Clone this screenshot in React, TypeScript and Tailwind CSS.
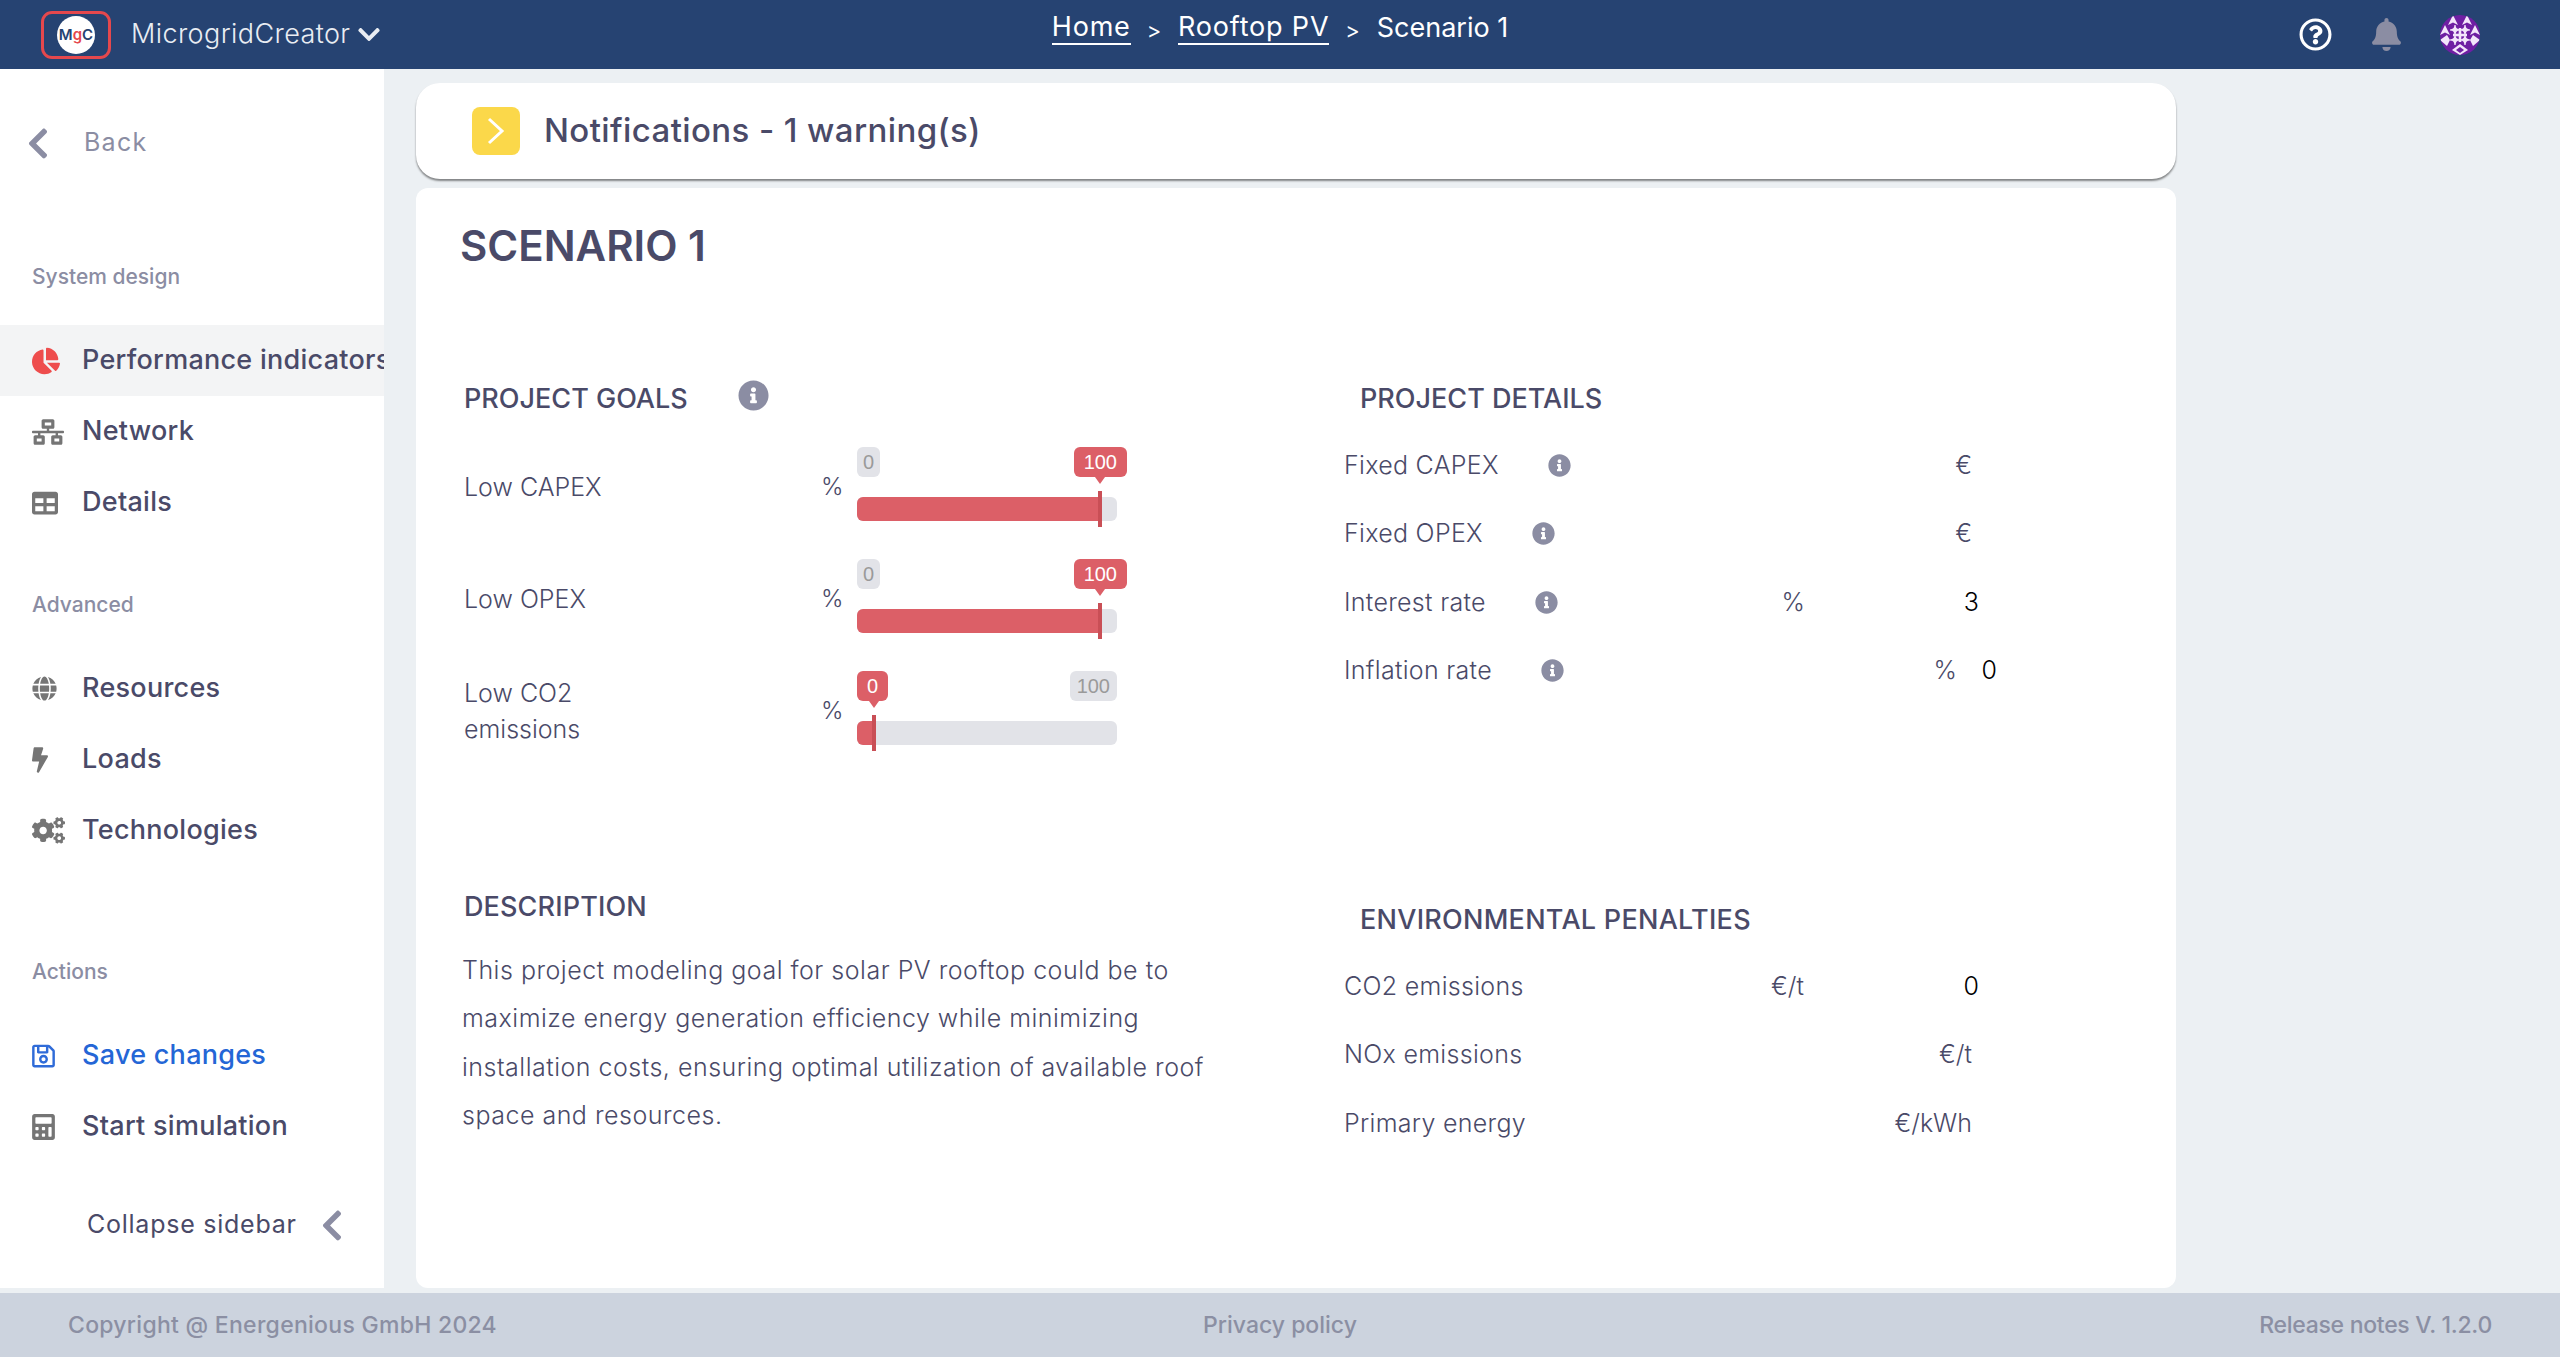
import React from 'react';
import {
  FaBell,
  FaBolt,
  FaCalculator,
  FaChartPie,
  FaChevronDown,
  FaChevronLeft,
  FaCogs,
  FaGlobe,
  FaInfoCircle,
  FaNetworkWired,
  FaRegQuestionCircle,
  FaRegSave,
  FaTable,
} from 'react-icons/fa';

const FONT = "font-['Inter','Liberation_Sans',sans-serif]";

// Sidebar row with icon and label
function NavItem({
  icon,
  label,
  active,
  textClass = 'text-[#4a4a68]',
}: {
  icon: React.ReactNode;
  label: string;
  active?: boolean;
  textClass?: string;
}) {
  return (
    <div className={`flex h-[71px] items-center pl-[32px] whitespace-nowrap ${active ? 'bg-[#f3f4f5]' : ''}`}>
      <span className="flex w-[50px] shrink-0 items-center">{icon}</span>
      <span className={`text-[27px] font-medium tracking-[0.01em] ${textClass}`}>{label}</span>
    </div>
  );
}

function SectionLabel({ className, children }: { className: string; children: React.ReactNode }) {
  return (
    <div className={`h-[30px] pl-[32px] text-[21px] leading-[30px] font-medium text-[#8b8da3] ${className}`}>
      {children}
    </div>
  );
}

function Sidebar() {
  const iconClass = 'text-[#757575]';
  return (
    <aside className="h-full w-[384px] shrink-0 overflow-hidden bg-white pt-[54px]">
      <div className="flex h-[40px] items-center pl-[27px]">
        <FaChevronLeft className="h-[35px] w-[22px] text-[#8b8da3]" />
        <span className="ml-[35px] text-[25px] tracking-[0.05em] text-[#8b8da3]">Back</span>
      </div>

      <SectionLabel className="mt-[99px]">System design</SectionLabel>
      <div className="mt-[33px]">
        <NavItem active icon={<FaChartPie className="text-[#ee4d4d]" size={28} />} label="Performance indicators" />
        <NavItem icon={<FaNetworkWired className={iconClass} size={32} />} label="Network" />
        <NavItem icon={<FaTable className={iconClass} size={26} />} label="Details" />
      </div>

      <SectionLabel className="mt-[52px]">Advanced</SectionLabel>
      <div className="mt-[33px]">
        <NavItem icon={<FaGlobe className={iconClass} size={25} />} label="Resources" />
        <NavItem icon={<FaBolt className={`h-[26px] w-[16px] ${iconClass}`} />} label="Loads" />
        <NavItem icon={<FaCogs className={iconClass} size={33} />} label="Technologies" />
      </div>

      <SectionLabel className="mt-[91px]">Actions</SectionLabel>
      <div className="mt-[33px]">
        <NavItem
          icon={<FaRegSave className="h-[26px] w-[23px] text-[#2f6bd8]" />}
          label="Save changes"
          textClass="text-[#2466d6]"
        />
        <NavItem icon={<FaCalculator className={`h-[26px] w-[23px] ${iconClass}`} />} label="Start simulation" />
      </div>

      <div className="mt-[43px] flex h-[40px] items-center pl-[87px]">
        <span className="text-[25px] tracking-[0.03em] text-[#4a4a68]">Collapse sidebar</span>
        <FaChevronLeft className="ml-[24px] h-[35px] w-[22px] text-[#8b8da3]" />
      </div>
    </aside>
  );
}

function Logo() {
  return (
    <div className="flex h-[48px] w-[70px] items-center justify-center rounded-[11px] border-[3px] border-[#e5484d]">
      <div className="flex h-[38px] w-[38px] items-center justify-center rounded-full bg-white text-[15px] leading-none font-semibold text-[#264372]">
        M<span className="text-[#e5484d]">g</span>C
      </div>
    </div>
  );
}

// Generated identicon in the top bar
function Avatar() {
  const stars = [
    [15, 15], [25, 15], [15, 25], [25, 25],
  ];
  const white = '#f3e6fb';
  return (
    <svg width="40" height="40" viewBox="0 0 40 40">
      <clipPath id="avatar-clip">
        <circle cx="20" cy="20" r="20" />
      </clipPath>
      <g clipPath="url(#avatar-clip)">
        <rect width="40" height="40" fill="#6f1fa3" />
        {/* top and side arrows */}
        <path d="M13 0L18 10L13 7.5L8 10Z" fill={white} />
        <path d="M27 0L32 10L27 7.5L22 10Z" fill={white} />
        <path d="M5 10L10 20L5 17.5L0 20Z" fill={white} />
        <path d="M35 10L40 20L35 17.5L30 20Z" fill={white} />
        <path d="M0 25L7 20L10 25L7 31Z" fill={white} />
        <path d="M40 25L33 20L30 25L33 31Z" fill={white} />
        {/* bottom diamond, hollow */}
        <path d="M20 29L28 35L20 40L12 35Z" fill={white} />
        <path d="M20 32L24 35L20 38L16 35Z" fill="#6f1fa3" />
        {stars.map(([x, y]) => (
          <path
            key={`${x}-${y}`}
            d={`M${x} ${y - 5}Q${x} ${y} ${x + 5} ${y}Q${x} ${y} ${x} ${y + 5}Q${x} ${y} ${x - 5} ${y}Q${x} ${y} ${x} ${y - 5}Z`}
            fill={white}
            stroke={white}
            strokeWidth="1.2"
          />
        ))}
        <rect x="18.7" y="13" width="2.6" height="14" fill={white} />
        <rect x="13" y="18.7" width="14" height="2.6" fill={white} />
      </g>
    </svg>
  );
}

function Header() {
  const crumb = 'border-b-2 border-white leading-[32px]';
  return (
    <header className="grid h-[69px] shrink-0 grid-cols-[1fr_auto_1fr] items-center bg-[#264372] text-white">
      <div className="flex items-center pl-[41px]">
        <Logo />
        <span className="ml-[20px] text-[27px] font-light tracking-[0.015em] text-[#e9edf3]">MicrogridCreator</span>
        <FaChevronDown className="ml-[8px] h-[25px] w-[22px] text-[#e9edf3]" />
      </div>
      <nav className="-mt-[14px] flex items-center text-[27px] tracking-[0.03em]">
        <span className={crumb}>Home</span>
        <span className="mx-[16px] mt-[6px] text-[22px]">&gt;</span>
        <span className={crumb}>Rooftop PV</span>
        <span className="mx-[16px] mt-[6px] text-[22px]">&gt;</span>
        <span className="leading-[32px] tracking-normal">Scenario 1</span>
      </nav>
      <div className="flex items-center justify-end pr-[80px]">
        <FaRegQuestionCircle size={33} />
        <FaBell className="ml-[40px] h-[33px] w-[29px] text-[#8b8da3]" />
        <span className="ml-[39px] flex">
          <Avatar />
        </span>
      </div>
    </header>
  );
}

function GoalSlider({ value }: { value: number }) {
  // Thumb sits 17px from the track start at 0 and 243px at 100
  const thumb = 17 + (226 * value) / 100;
  const isMax = value === 100;
  return (
    <div className="relative h-[80px] w-[260px] shrink-0 self-start">
      <div className="flex h-[30px] justify-between text-[20px] leading-[30px] font-['Liberation_Sans',sans-serif]">
        {isMax ? (
          <span className="rounded-[6px] bg-[#e2e3e8] px-[6px] text-[#9a9a9a]">0</span>
        ) : (
          <span className="rounded-[6px] bg-[#dc5f67] px-[10px] font-medium text-white">0</span>
        )}
        {isMax ? (
          <span className="-mr-[10px] rounded-[6px] bg-[#dc5f67] px-[10px] text-white">100</span>
        ) : (
          <span className="rounded-[6px] bg-[#e2e3e8] px-[7px] text-[#9a9a9a]">100</span>
        )}
      </div>
      <div
        className="absolute top-[30px] -ml-[5px] h-0 w-0 border-x-[5px] border-t-[7px] border-x-transparent border-t-[#dc5f67]"
        style={{ left: thumb }}
      />
      <div className="mt-[20px] h-[24px] overflow-hidden rounded-[6px] bg-[#e2e3e8]">
        <div className="h-full bg-[#dc5f67]" style={{ width: thumb }} />
      </div>
      <div className="absolute top-[44px] -ml-[2px] h-[36px] w-[4px] bg-[#c94f56]" style={{ left: thumb }} />
    </div>
  );
}

function GoalRow({ label, value }: { label: React.ReactNode; value: number }) {
  return (
    <div className="mb-[32px] flex h-[80px] items-center">
      <div className="w-[357px] shrink-0 text-[25px] leading-[36px] font-light text-[#4a4a68]">{label}</div>
      <div className="w-[36px] shrink-0 text-[24px] font-light text-[#4a4a68]">%</div>
      <GoalSlider value={value} />
    </div>
  );
}

function Info({ size = 23 }: { size?: number }) {
  return <FaInfoCircle className="shrink-0 text-[#8b8da3]" size={size} />;
}

// Label, optional info icon, unit and optional value on one line
function FieldRow({
  label,
  info,
  unit,
  unitClass = 'mr-[28px]',
  value,
  valueClass = '',
}: {
  label: string;
  info?: boolean;
  unit: string;
  unitClass?: string;
  value?: string;
  valueClass?: string;
}) {
  return (
    <div className="flex h-[68.5px] w-[656px] items-center text-[25px] font-light text-[#4a4a68]">
      <span className="tracking-[0.012em]">{label}</span>
      {info && (
        <span className="ml-[49px] flex">
          <Info />
        </span>
      )}
      <span className={`ml-auto ${unitClass}`}>{unit}</span>
      {value && <span className={`text-right text-black ${valueClass}`}>{value}</span>}
    </div>
  );
}

function SectionHeading({ className = '', children }: { className?: string; children: React.ReactNode }) {
  return (
    <h2 className={`h-[36px] text-[27px] leading-[36px] font-medium whitespace-nowrap text-[#4a4a68] ${className}`}>
      {children}
    </h2>
  );
}

function ScenarioCard() {
  return (
    <section className="mt-[9px] h-[1100px] w-[1760px] rounded-[12px] bg-white pt-[34px] pl-[44px]">
      <h1 className="h-[48px] text-[42px] leading-[48px] font-semibold text-[#4a4a68]">SCENARIO 1</h1>

      <div className="mt-[111px] grid grid-cols-[884px_1fr]">
        <div className="h-[508px] pl-[4px]">
          <div className="flex items-center">
            <SectionHeading>PROJECT GOALS</SectionHeading>
            <span className="ml-[50px] -mt-[7px] flex">
              <Info size={31} />
            </span>
          </div>
          <div className="mt-[30px]">
            <GoalRow label="Low CAPEX" value={100} />
            <GoalRow label="Low OPEX" value={100} />
            <GoalRow
              label={
                <>
                  Low CO2
                  <br />
                  emissions
                </>
              }
              value={0}
            />
          </div>
        </div>

        <div className="h-[508px]">
          <SectionHeading className="pl-[16px]">PROJECT DETAILS</SectionHeading>
          <div className="mt-[14px]">
            <FieldRow label="Fixed CAPEX" info unit="€" />
            <FieldRow label="Fixed OPEX" info unit="€" />
            <FieldRow
              label="Interest rate"
              info
              unit="%"
              unitClass="mr-0"
              value="3"
              valueClass="w-[195px] pr-[21px]"
            />
            <FieldRow
              label="Inflation rate"
              info
              unit="%"
              unitClass="mr-0"
              value="0"
              valueClass="w-[43px] pr-[3px]"
            />
          </div>
        </div>

        <div className="pl-[4px]">
          <SectionHeading className="tracking-[0.005em]">DESCRIPTION</SectionHeading>
          <p className="mt-[21px] -ml-[2px] w-[790px] text-[25px] leading-[48.3px] font-light tracking-[0.02em] text-[#4a4a68]">
            This project modeling goal for solar PV rooftop could be to maximize energy generation efficiency while
            minimizing installation costs, ensuring optimal utilization of available roof space and resources.
          </p>
        </div>

        <div className="pt-[13px]">
          <SectionHeading className="pl-[16px] tracking-[0.01em]">ENVIRONMENTAL PENALTIES</SectionHeading>
          <div className="mt-[14px]">
            <FieldRow label="CO2 emissions" unit="€/t" unitClass="mr-0" value="0" valueClass="w-[196px] pr-[21px]" />
            <FieldRow label="NOx emissions" unit="€/t" />
            <FieldRow label="Primary energy" unit="€/kWh" />
          </div>
        </div>
      </div>
    </section>
  );
}

function NotificationBar() {
  return (
    <div className="flex h-[96px] w-[1760px] items-center rounded-[24px] bg-white pl-[56px] shadow-[0_2px_2px_rgba(0,0,0,0.45)]">
      <span className="flex h-[48px] w-[48px] items-center justify-center rounded-[8px] bg-[#fbd84a]">
        <svg width="18" height="28" viewBox="0 0 18 28" fill="none" stroke="white" strokeWidth="3">
          <path d="M2 2L15 14L2 26" />
        </svg>
      </span>
      <span className="ml-[24px] text-[33px] font-medium tracking-[0.012em] text-[#4a4a68]">
        Notifications - 1 warning(s)
      </span>
    </div>
  );
}

function Footer() {
  return (
    <footer className="grid h-[64px] shrink-0 grid-cols-3 items-center bg-[#ccd3de] px-[68px] text-[23px] font-medium text-[#8b8fa3]">
      <span className="tracking-[0.012em]">Copyright @ Energenious GmbH 2024</span>
      <span className="text-center">Privacy policy</span>
      <span className="text-right tracking-[-0.012em]">Release notes V. 1.2.0</span>
    </footer>
  );
}

export default function App() {
  return (
    <div className={`flex h-screen w-full flex-col overflow-hidden bg-[#ecf0f3] ${FONT}`}>
      <Header />
      <div className="flex min-h-0 flex-1">
        <Sidebar />
        <main className="pt-[14px] pl-[32px]">
          <NotificationBar />
          <ScenarioCard />
        </main>
      </div>
      <div className="h-[5px] shrink-0" />
      <Footer />
    </div>
  );
}
